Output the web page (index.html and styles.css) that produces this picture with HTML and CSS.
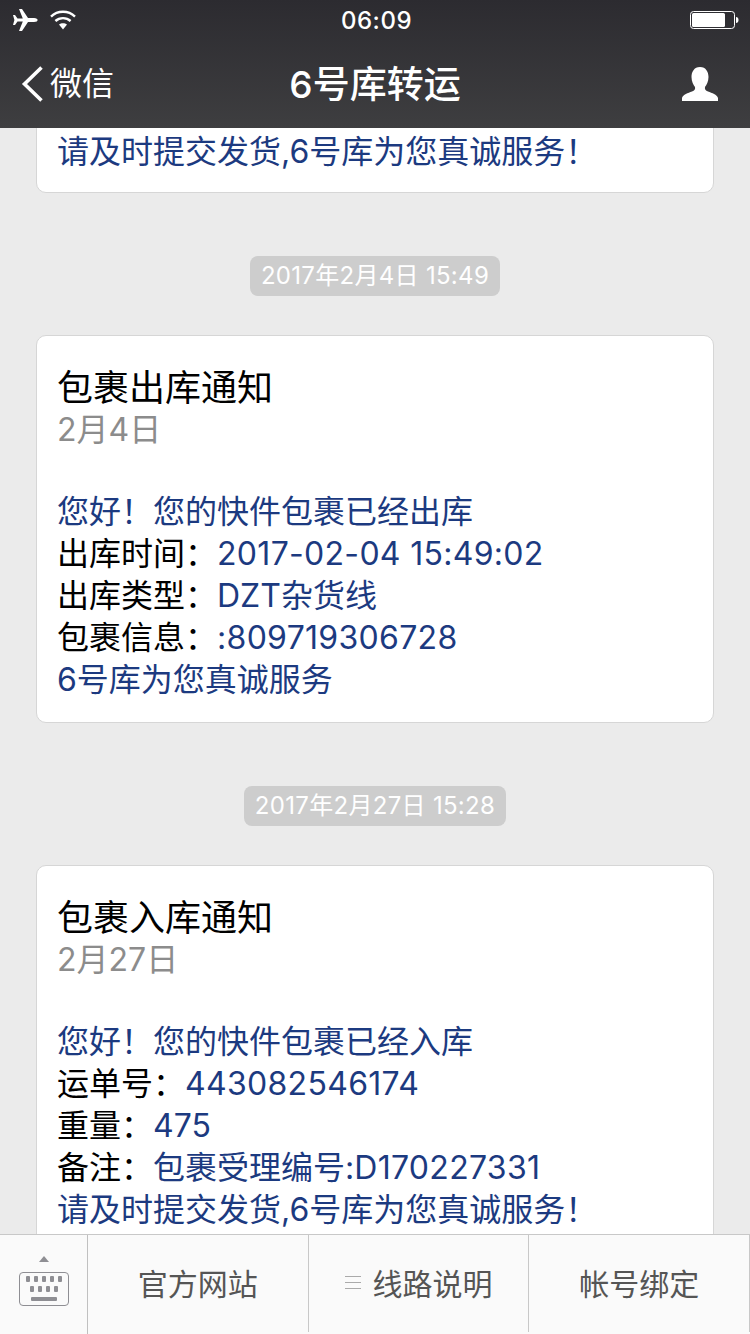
FILE: index.html
```html
<!DOCTYPE html>
<html lang="zh-CN">
<head>
<meta charset="utf-8">
<title>6号库转运</title>
<link rel="stylesheet" href="styles.css">
</head>
<body>
<div class="phone">
  <header class="topbar">
    <div class="status">
      <div class="status-left">
        <svg class="ic-plane" viewBox="0 0 26 24"><path d="M1 7 L3 7 L5.500 10.400 L10.800 10.400 L7 1 L10 1 L16 10 L22 10 C24.500 10 25.600 11 25.600 12 C25.600 13 24.500 14 22 14 L16 14 L10 23 L7 23 L10.800 13.600 L5.500 13.600 L3 17 L1 17 L2.400 12 Z" fill="#fff"/></svg>
        <svg class="ic-wifi" viewBox="0 0 26 20"><path d="M13 19.500 L9 14.600 C11.300 12.700 14.700 12.700 17 14.600 Z" fill="#fff"/><path d="M5.400 11 C9.600 7.200 16.400 7.200 20.600 11" fill="none" stroke="#fff" stroke-width="2.400"/><path d="M1 6.600 C7.600 0.200 18.400 0.200 25 6.600" fill="none" stroke="#fff" stroke-width="2.400"/></svg>
      </div>
      <div class="clock">06:09</div>
      <svg class="ic-battery" viewBox="0 0 50 20"><rect x="1.500" y="1.500" width="44" height="17" rx="3" fill="none" stroke="#fff" stroke-width="1"/><rect x="3" y="3" width="33" height="14" rx="1.500" fill="#fff"/><path d="M47 7 C48.500 7 49.500 8 49.500 10 C49.500 12 48.500 13 47 13 Z" fill="#fff"/></svg>
    </div>
    <nav class="navbar">
      <div class="back">
        <svg class="ic-back" viewBox="0 0 24 36"><path d="M21.500 1.500 L4.500 18 L21.500 34.500" fill="none" stroke="#fff" stroke-width="3.600"/></svg>
        <span class="back-label">微信</span>
      </div>
      <h1 class="title">6号库转运</h1>
      <svg class="ic-user" viewBox="0 0 38 36"><path d="M19 1 C25 1 27.500 6 27.500 11 C27.500 15.500 25.500 19 24 21 C23.500 23 24.500 24.500 27 25.500 C31 27 36 28.500 37 32 L37 35 L1 35 L1 32 C2 28.500 7 27 11 25.500 C13.500 24.500 14.500 23 14 21 C12.500 19 10.500 15.500 10.500 11 C10.500 6 13 1 19 1 Z" fill="#fff"/></svg>
    </nav>
  </header>

  <main class="feed">
    <article class="card card-tail">
      <p class="line blue">请及时提交发货,6号库为您真诚服务！</p>
    </article>

    <div class="stamp-row stamp-first"><span class="stamp">2017年2月4日 15:49</span></div>
    <article class="card">
      <p class="line card-title">包裹出库通知</p>
      <p class="line muted">2月4日</p>
      <div class="spacer"></div>
      <p class="line blue">您好！您的快件包裹已经出库</p>
      <p class="line">出库时间：<span class="blue num">2017-02-04 15:49:02</span></p>
      <p class="line">出库类型：<span class="blue">DZT杂货线</span></p>
      <p class="line">包裹信息：<span class="blue num">:809719306728</span></p>
      <p class="line blue">6号库为您真诚服务</p>
    </article>

    <div class="stamp-row"><span class="stamp">2017年2月27日 15:28</span></div>
    <article class="card">
      <p class="line card-title">包裹入库通知</p>
      <p class="line muted">2月27日</p>
      <div class="spacer"></div>
      <p class="line blue">您好！您的快件包裹已经入库</p>
      <p class="line">运单号：<span class="blue num">443082546174</span></p>
      <p class="line">重量：<span class="blue">475</span></p>
      <p class="line">备注：<span class="blue">包裹受理编号:<span class="num">D170227331</span></span></p>
      <p class="line blue">请及时提交发货,6号库为您真诚服务！</p>
    </article>
  </main>

  <footer class="menu">
    <div class="kbd">
      <svg class="ic-kbd" viewBox="0 0 52 52"><path d="M21 7 L26 1 L31 7 Z" fill="#8e8e93"/><rect x="1.500" y="17.500" width="49" height="33" rx="3.500" fill="none" stroke="#8e8e93" stroke-width="1"/><g fill="#8e8e93"><rect x="8" y="21" width="4" height="6" rx="1"/><rect x="16" y="21" width="4" height="6" rx="1"/><rect x="24" y="21" width="4" height="6" rx="1"/><rect x="32" y="21" width="4" height="6" rx="1"/><rect x="40" y="21" width="4" height="6" rx="1"/><rect x="12" y="31" width="4" height="6" rx="1"/><rect x="20" y="31" width="4" height="6" rx="1"/><rect x="28" y="31" width="4" height="6" rx="1"/><rect x="36" y="31" width="4" height="6" rx="1"/><rect x="13" y="42" width="26" height="4" rx="1"/></g></svg>
    </div>
    <div class="menu-item">官方网站</div>
    <div class="menu-item menu-item-mid"><span class="burger"></span>线路说明</div>
    <div class="menu-item">帐号绑定</div>
  </footer>
</div>
</body>
</html>
```
FILE: styles.css
```css
* { box-sizing: border-box; }
html, body { margin: 0; padding: 0; }
body {
  width: 750px;
  height: 1334px;
  overflow: hidden;
  font-family: Inter, "Noto Sans CJK SC", sans-serif;
  color: #000;
}
.phone {
  width: 750px;
  height: 1334px;
  display: flex;
  flex-direction: column;
  background: #ebebeb;
}
.topbar {
  height: 128px;
  flex: none;
  background: linear-gradient(180deg, #2c2b30 0%, #3e3e40 100%);
  color: #fff;
  position: relative;
  z-index: 2;
}
.status {
  height: 40px;
  display: flex;
  align-items: center;
  justify-content: space-between;
  padding: 0 11px 0 12px;
  position: relative;
}
.status-left { display: flex; align-items: center; gap: 12px; }
.ic-plane { width: 26px; height: 24px; display: block; }
.ic-wifi { width: 26px; height: 20px; display: block; }
.ic-battery { width: 50px; height: 20px; display: block; }
.clock {
  position: absolute;
  left: 0;
  right: 0;
  top: 1px;
  padding-left: 3px;
  text-align: center;
  font-size: 24px;
  letter-spacing: 0.5px;
  line-height: 40px;
  font-weight: 500;
}
.navbar {
  height: 88px;
  display: flex;
  align-items: center;
  justify-content: space-between;
  padding: 0 31px 0 20px;
  position: relative;
}
.back { display: flex; align-items: center; gap: 6px; }
.ic-back { width: 24px; height: 36px; display: block; }
.back-label { font-size: 32px; line-height: 40px; }
.title {
  position: absolute;
  left: 0;
  right: 0;
  top: 0;
  margin: 0;
  text-align: center;
  font-size: 37px;
  font-weight: 500;
  line-height: 90px;
}
.ic-user { width: 38px; height: 36px; display: block; }
.feed {
  flex: 1;
  min-height: 0;
  overflow: hidden;
  padding: 0 36px;
}
.card {
  background: #fff;
  border: 1px solid #d6d6d6;
  border-radius: 10px;
  padding: 31px 20px 21px;
}
.card-tail {
  margin-top: -22px;
  padding-top: 24px;
  padding-bottom: 19px;
}
.line {
  margin: 0;
  font-size: 32px;
  line-height: 42px;
  white-space: nowrap;
}
.card-title { font-size: 36px; }
.blue { color: #1c3a80; }
.muted { color: #8c8c8c; }
.num { letter-spacing: 0.3px; }
.spacer { height: 40px; }
.stamp-row {
  display: flex;
  justify-content: center;
  padding: 63px 0 39px;
}
.stamp {
  height: 40px;
  padding: 0 11px;
  border-radius: 8px;
  background: #cdcdcd;
  color: #fff;
  font-size: 24px;
  letter-spacing: 0.3px;
  line-height: 40px;
}
.menu {
  height: 100px;
  flex: none;
  display: flex;
  background: #fafafa;
  border-top: 1px solid #c8c8c8;
  position: relative;
  z-index: 2;
}
.kbd {
  width: 88px;
  flex: none;
  border-right: 1px solid #c0c0c0;
  display: flex;
  justify-content: center;
  padding-top: 20px;
}
.ic-kbd { width: 52px; height: 52px; display: block; }
.menu-item {
  flex: 1;
  border-right: 1px solid #c8c8c8;
  margin-bottom: 2px;
  display: flex;
  align-items: center;
  justify-content: center;
  font-size: 30px;
  color: #555;
  padding-bottom: 4px;
}
.burger {
  width: 16px;
  height: 13px;
  margin: 2px 12px 0 0;
  border-top: 1px solid #aaa;
  border-bottom: 1px solid #aaa;
  position: relative;
}
.burger::after {
  content: "";
  position: absolute;
  left: 0;
  right: 0;
  top: 5px;
  height: 1px;
  background: #aaa;
}
```
